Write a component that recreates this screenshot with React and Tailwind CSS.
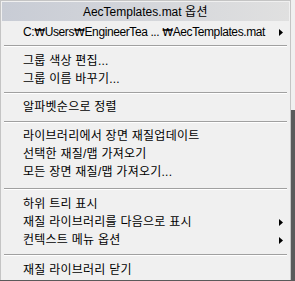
const Arrow = () => (
  <svg width="4" height="7" viewBox="0 0 4 7" className="shrink-0">
    <path d="M0 0 L4 3.5 L0 7 Z" fill="#000" />
  </svg>
);

const Item = ({ label, sub }) => (
  <div className="flex items-center h-[18px] pl-[21px] pr-[6px]">
    <span className="flex-1 whitespace-nowrap text-[12px] tracking-[0.25px]">{label}</span>
    {sub && <Arrow />}
  </div>
);

const Won = () => (
  <span className="text-[11px]" style={{ fontFamily: '"DejaVu Sans", sans-serif' }}>
    ₩
  </span>
);

const Sep = ({ className = "" }) => (
  <div className={"mx-[2px] " + className}>
    <div className="h-px bg-[#a0a0a0]" />
    <div className="h-px bg-white" />
  </div>
);

export default function App() {
  return (
    <div
      className="w-[295px] h-[281px] bg-[#f0f0f0] flex flex-col text-[12px] text-black leading-none"
      style={{ fontFamily: '"Liberation Sans", "Noto Sans CJK KR", sans-serif' }}
    >
      <div className="flex flex-1">
        <div className="w-[291px] border border-[#c4c4c4] border-b-0 p-px flex flex-col">
          <div className="h-[19px] flex items-center justify-center bg-gradient-to-r from-[#c8ccd5] to-[#e0e0e0]">
            <span>
              AecTemplates.mat <span className="tracking-[0.5px]">옵션</span>
            </span>
          </div>
          <div className="mt-[2px] flex items-center h-[18px] pl-[21px] pr-[6px]">
            <span className="flex-1 whitespace-nowrap tracking-[-0.4px]">
              C:<Won />Users<Won />EngineerTea ... <Won />AecTemplates.mat
            </span>
            <Arrow />
          </div>
          <Sep className="mt-[4px] mb-[5px]" />
          <Item label="그룹 색상 편집..." />
          <Item label="그룹 이름 바꾸기..." />
          <Sep className="mt-[4px] mb-[4px]" />
          <Item label="알파벳순으로 정렬" />
          <Sep className="mt-[5px] mb-[4px]" />
          <Item label="라이브러리에서 장면 재질업데이트" />
          <Item label="선택한 재질/맵 가져오기" />
          <Item label="모든 장면 재질/맵 가져오기..." />
          <Sep className="mt-[7px] mb-[5px]" />
          <Item label="하위 트리 표시" />
          <Item label="재질 라이브러리를 다음으로 표시" sub />
          <Item label="컨텍스트 메뉴 옵션" sub />
          <Sep className="mt-[5px] mb-[5px]" />
          <Item label="재질 라이브러리 닫기" />
        </div>
        <div className="w-[4px] flex flex-col">
          <div className="h-[110px]" />
          <div className="flex-1 bg-[#5a5a5a]" />
        </div>
      </div>
      <div className="h-[3px] bg-[#5a5a5a]" />
    </div>
  );
}
